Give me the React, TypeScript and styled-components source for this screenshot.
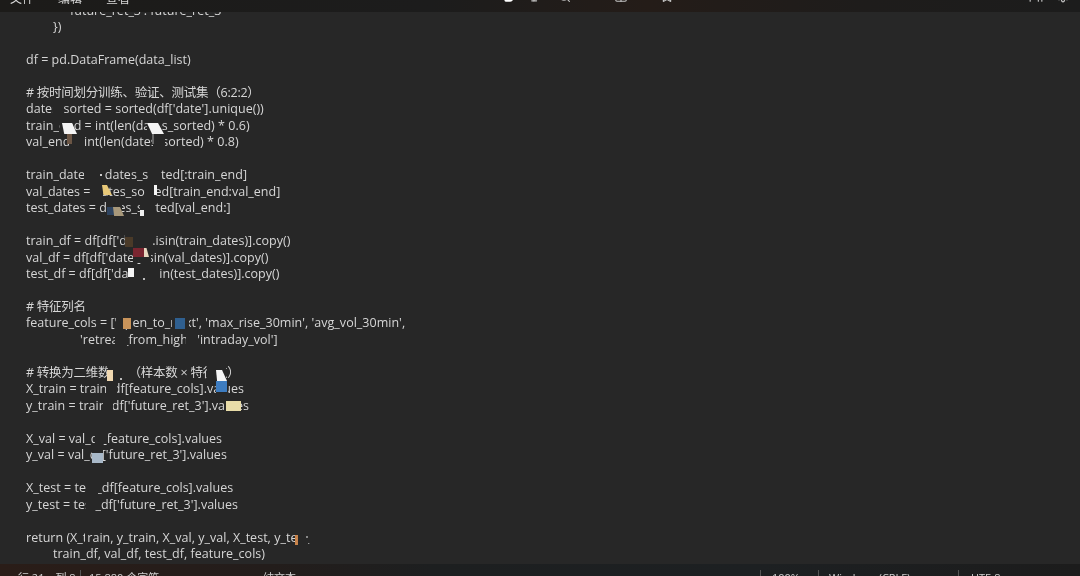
import React from "react";
import styled, { createGlobalStyle } from "styled-components";
import { Bold, Italic, Search, Table, Star, Settings, Users } from "lucide-react";

const Global = createGlobalStyle`
  html, body {
    margin: 0;
    padding: 0;
    background: #272727;
  }
`;

const Page = styled.div`
  position: relative;
  width: 1080px;
  height: 576px;
  overflow: hidden;
  display: flex;
  flex-direction: column;
  background: #272727;
  font-family: "Open Sans", "Noto Sans CJK SC", sans-serif;
  filter: blur(0.35px);
`;

const TopBar = styled.div`
  flex: 0 0 12px;
  position: relative;
  z-index: 2;
  display: flex;
  align-items: flex-end;
  overflow: hidden;
  background: linear-gradient(90deg, #1c1b19 0%, #1c1c1c 40%, #241c18 60%, #1e1c1b 80%, #1c1c1c 100%);
  color: #d8d8d8;
  font-size: 12px;
`;

const Menu = styled.div`
  display: flex;
  gap: 24px;
  padding-left: 10px;
  margin-bottom: 5px;
  line-height: 16px;
  flex-shrink: 0;
`;

const Tools = styled.div`
  display: flex;
  align-items: flex-end;
  margin-left: auto;
  padding-right: 10px;
  margin-bottom: 9px;
  color: #c4c4c4;
`;

const ToolIcon = styled.span<{ $gap: number }>`
  display: flex;
  margin-left: ${(p) => p.$gap}px;
`;

const Dots = styled.span`
  font-size: 12px;
  line-height: 12px;
  margin-right: 80px;
  margin-bottom: 4px;
  color: #aaa;
  letter-spacing: 1px;
`;

const Editor = styled.div`
  flex: 1;
  overflow: hidden;
  padding-left: 26px;
  color: #d6d6d6;
  font-size: 12.5px;
  line-height: 16.47px;
  letter-spacing: 0.02px;
`;

const Scrolled = styled.div`
  margin-top: -9.5px;
`;

const Line = styled.div<{ $indent?: number; $cjk?: boolean }>`
  height: 16.47px;
  white-space: pre;
  padding-left: ${(p) => p.$indent ?? 0}px;
  letter-spacing: ${(p) => (p.$cjk ? "-0.25px" : "inherit")};
`;

const StatusBar = styled.div`
  flex: 0 0 12px;
  position: relative;
  z-index: 2;
  display: flex;
  overflow: hidden;
  background: linear-gradient(90deg, #2a1d18 0%, #231d1b 25%, #1d1f20 40%, #1d2022 70%, #1c1c1c 100%);
  color: #cfcfcf;
  font-size: 11px;
  line-height: 16px;
`;

const Cell = styled.div<{ $w: number; $pad: number; $rule?: boolean }>`
  flex: 0 0 ${(p) => p.$w}px;
  padding-left: ${(p) => p.$pad}px;
  box-sizing: border-box;
  margin-top: 6px;
  white-space: pre;
  border-left: ${(p) => (p.$rule ? "1px solid #555" : "none")};
`;

const Patch = styled.div<{ $x: number; $y: number; $w: number; $h: number; $c: string; $clip?: string }>`
  position: absolute;
  left: ${(p) => p.$x}px;
  top: ${(p) => p.$y}px;
  width: ${(p) => p.$w}px;
  height: ${(p) => p.$h}px;
  background: ${(p) => p.$c};
  clip-path: ${(p) => p.$clip ?? "none"};
`;

const BG = "#272727";

type Row = { t: string; i?: number; cjk?: boolean };

const rows: Row[] = [
  { t: "future_ret_3': future_ret_3", i: 44 },
  { t: "})", i: 27 },
  { t: "" },
  { t: "df = pd.DataFrame(data_list)" },
  { t: "" },
  { t: "# 按时间划分训练、验证、测试集（6:2:2）", cjk: true },
  { t: "dates_sorted = sorted(df['date'].unique())" },
  { t: "train_end = int(len(dates_sorted) * 0.6)" },
  { t: "val_end = int(len(dates_sorted) * 0.8)" },
  { t: "" },
  { t: "train_dates = dates_sorted[:train_end]" },
  { t: "val_dates = dates_sorted[train_end:val_end]" },
  { t: "test_dates = dates_sorted[val_end:]" },
  { t: "" },
  { t: "train_df = df[df['date'].isin(train_dates)].copy()" },
  { t: "val_df = df[df['date'].isin(val_dates)].copy()" },
  { t: "test_df = df[df['date'].isin(test_dates)].copy()" },
  { t: "" },
  { t: "# 特征列名", cjk: true },
  { t: "feature_cols = ['open_to_next', 'max_rise_30min', 'avg_vol_30min'," },
  { t: "'retreat_from_high', 'intraday_vol']", i: 54 },
  { t: "" },
  { t: "# 转换为二维数据 .（样本数 × 特征数）", cjk: true },
  { t: "X_train = train_df[feature_cols].values" },
  { t: "y_train = train_df['future_ret_3'].values" },
  { t: "" },
  { t: "X_val = val_df[feature_cols].values" },
  { t: "y_val = val_df['future_ret_3'].values" },
  { t: "" },
  { t: "X_test = test_df[feature_cols].values" },
  { t: "y_test = test_df['future_ret_3'].values" },
  { t: "" },
  { t: "return (X_train, y_train, X_val, y_val, X_test, y_test," },
  { t: "train_df, val_df, test_df, feature_cols)", i: 27 },
];

// x, y, w, h, colour, optional clip
type P = [number, number, number, number, string, string?];

const patches: P[] = [
  // parts of the text wiped by the mosaic
  [53, 102, 11, 13, BG],
  [60, 119, 9, 13, BG],
  [147, 119, 14, 13, BG],
  [69, 135, 16, 13, BG],
  [153, 135, 12, 13, BG],
  [84, 168, 20, 13, BG],
  [149, 168, 12, 13, BG],
  [94, 184, 9, 13, BG],
  [145, 184, 10, 13, BG],
  [107, 201, 15, 13, BG],
  [140, 201, 15, 13, BG],
  [125, 234, 27, 13, BG],
  [133, 250, 18, 13, BG],
  [128, 267, 32, 13, BG],
  [116, 316, 16, 13, BG],
  [172, 316, 17, 13, BG],
  [115, 333, 12, 13, BG],
  [186, 333, 11, 13, BG],
  [108, 366, 20, 13, BG],
  [207, 366, 19, 13, BG],
  [106, 382, 11, 13, BG],
  [216, 382, 12, 13, BG],
  [103, 399, 10, 13, BG],
  [226, 399, 14, 13, BG],
  [95, 431, 13, 13, BG],
  [92, 448, 11, 13, BG],
  [86, 481, 12, 13, BG],
  [86, 497, 11, 13, BG],
  [85, 530, 3, 13, BG],
  [295, 530, 16, 13, BG],

  // coloured mosaic bits
  [62, 123, 15, 11, "#f4f4f4", "polygon(0 0, 67% 0, 100% 100%, 15% 100%)"],
  [67, 134, 5, 10, "#6b5544"],
  [147, 123, 17, 11, "#f4f4f4", "polygon(0 0, 65% 0, 100% 100%, 30% 100%)"],
  [152, 134, 2, 10, "#666"],
  [100, 174, 2, 2, "#ccc"],
  [102, 185, 10, 10, "#e8c878", "polygon(0 0, 50% 0, 100% 100%, 15% 100%)"],
  [154, 185, 3, 10, "#f6f6f6"],
  [107, 207, 8, 8, "#2f4460"],
  [113, 207, 11, 9, "#a8987a", "polygon(0 0, 64% 0, 100% 100%, 10% 100%)"],
  [140, 210, 4, 6, "#f0f0f0"],
  [125, 237, 8, 10, "#4a3a28"],
  [133, 248, 12, 9, "#7a2530"],
  [144, 248, 5, 9, "#e8d8c0", "polygon(0 0, 50% 0, 100% 100%, 0 100%)"],
  [128, 268, 6, 9, "#f4f4f4"],
  [143, 278, 2, 2, "#bbb"],
  [123, 318, 8, 11, "#c8935a"],
  [175, 318, 10, 11, "#2f5f8f"],
  [107, 370, 6, 11, "#f0d8b0"],
  [120, 378, 2, 2, "#bbb"],
  [216, 370, 11, 11, "#f6f6f6", "polygon(0 0, 55% 0, 100% 100%, 10% 100%)"],
  [216, 381, 11, 11, "#3d7cc0"],
  [226, 401, 15, 10, "#e8dca8"],
  [92, 453, 11, 10, "#a8b8c8"],
  [295, 535, 3, 10, "#c8834a"],
  [306, 536, 2, 2, "#888"],
];

export default function App() {
  return (
    <Page>
      <Global />
      <TopBar>
        <Menu>
          <span>文件</span>
          <span>编辑</span>
          <span>查看</span>
        </Menu>
        <Tools>
          <Dots>···</Dots>
          <ToolIcon $gap={0}><Bold size={13} strokeWidth={3} color="#fff" /></ToolIcon>
          <ToolIcon $gap={14}><Italic size={13} /></ToolIcon>
          <ToolIcon $gap={16}><Search size={13} /></ToolIcon>
          <ToolIcon $gap={43}><Table size={14} /></ToolIcon>
          <ToolIcon $gap={32}><Star size={14} /></ToolIcon>
          <ToolIcon $gap={355}><Users size={14} /></ToolIcon>
          <ToolIcon $gap={13}><Settings size={14} /></ToolIcon>
        </Tools>
      </TopBar>
      <Editor>
        <Scrolled>
          {rows.map((r, i) => (
            <Line key={i} $indent={r.i} $cjk={r.cjk}>{r.t}</Line>
          ))}
        </Scrolled>
      </Editor>
      <StatusBar>
        <Cell $w={80} $pad={18}>{"行 21，列 8"}</Cell>
        <Cell $w={175} $pad={8} $rule>{"15,880 个字符"}</Cell>
        <Cell $w={505} $pad={8}>{"纯文本"}</Cell>
        <Cell $w={58} $pad={11} $rule>{"100%"}</Cell>
        <Cell $w={140} $pad={10} $rule>{"Windows (CRLF)"}</Cell>
        <Cell $w={122} $pad={12} $rule>{"UTF-8"}</Cell>
      </StatusBar>
      {patches.map(([x, y, w, h, c, clip], i) => (
        <Patch key={i} $x={x} $y={y} $w={w} $h={h} $c={c} $clip={clip} />
      ))}
    </Page>
  );
}
